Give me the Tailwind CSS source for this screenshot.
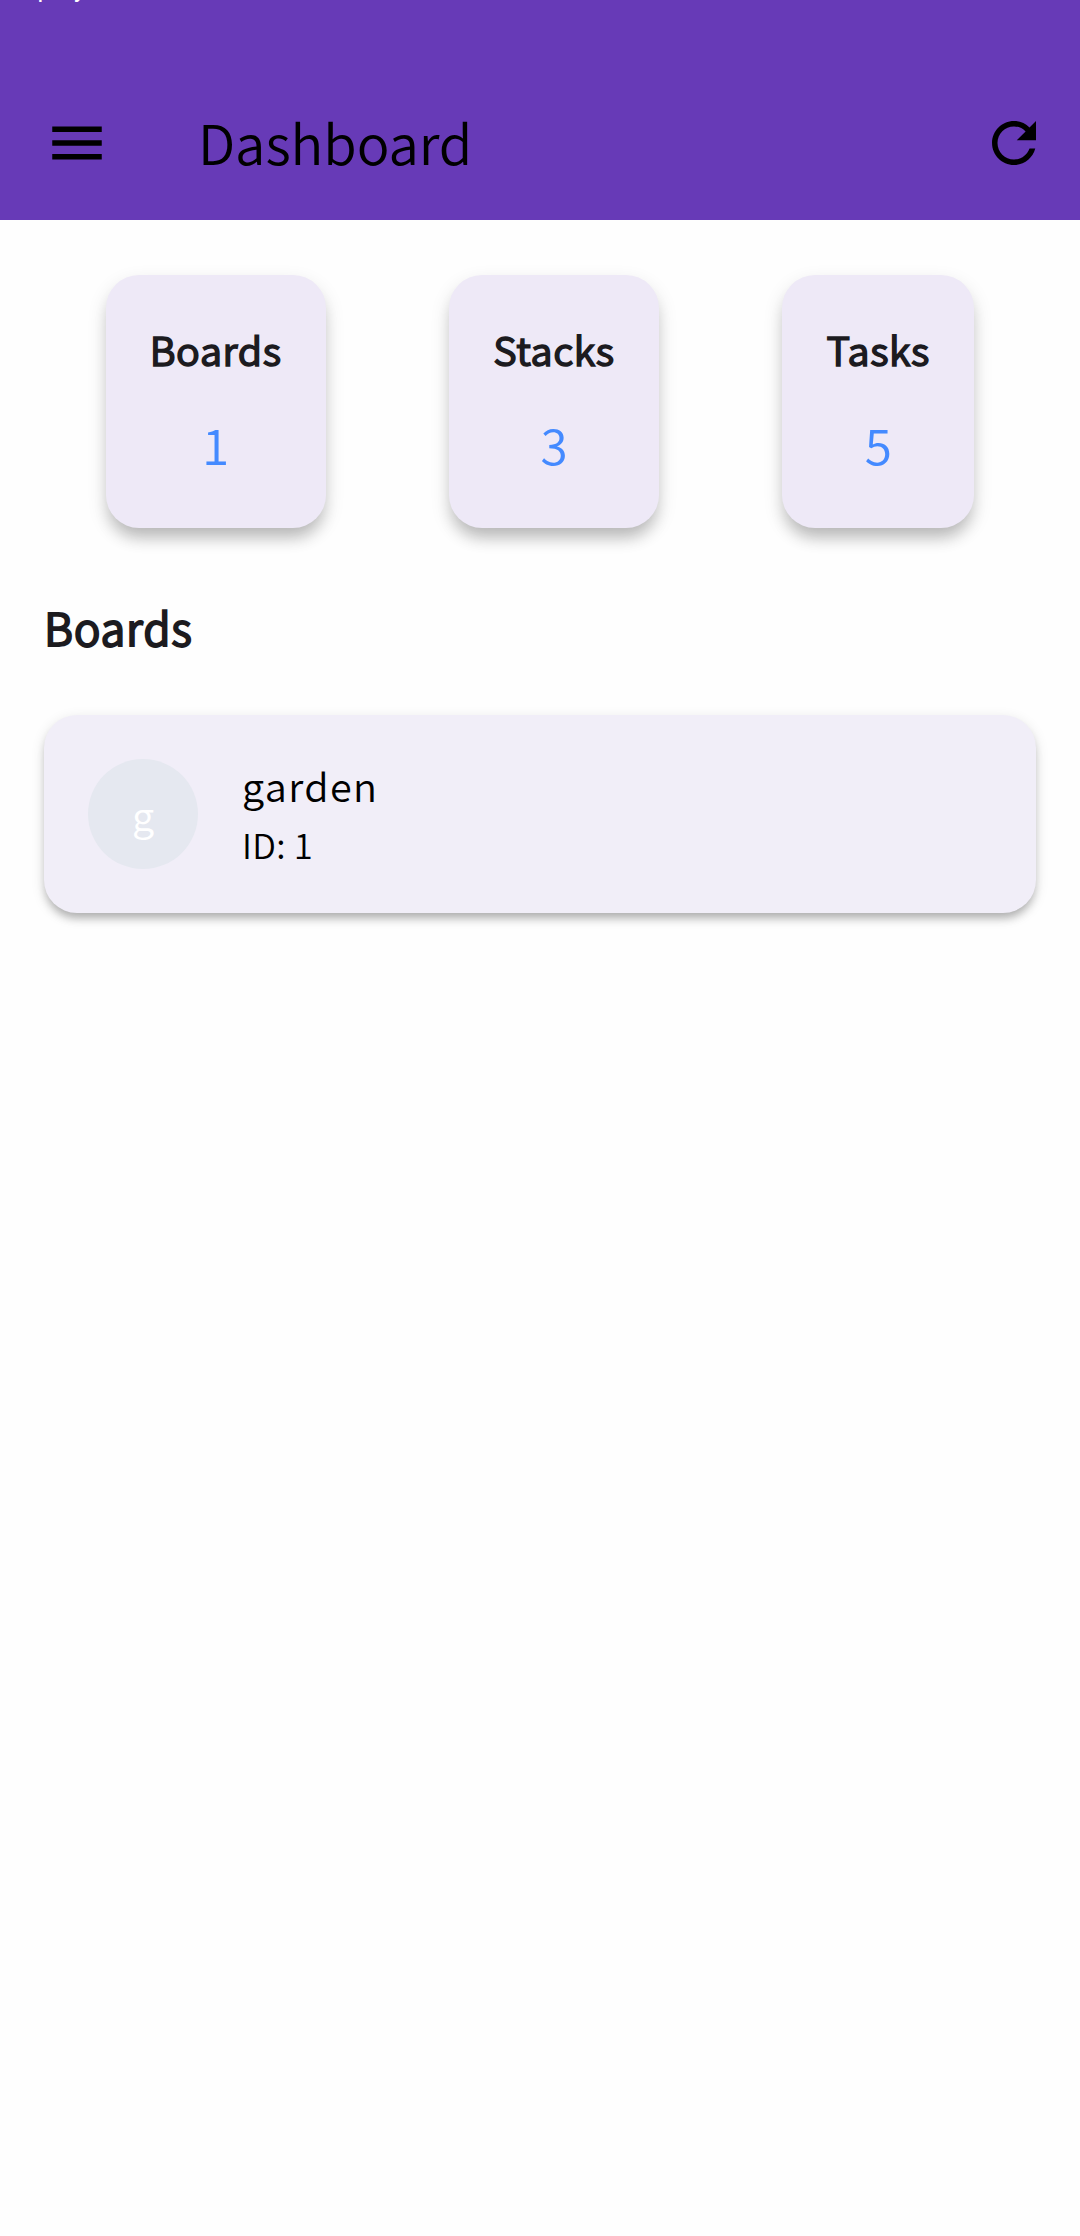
<!DOCTYPE html>
<html lang="en">
<head>
<meta charset="utf-8">
<title>Dashboard</title>
<script src="https://cdn.jsdelivr.net/npm/@tailwindcss/browser@4"></script>
</head>
<body class="min-h-[2236px] bg-[#fefefe] font-['Noto_Sans_CJK_SC',sans-serif] font-[350] text-black">
<header class="relative h-[220px] overflow-hidden bg-[#673ab7] pt-[66px]">
  <span class="absolute left-[-1px] -top-[27px] font-['Roboto',sans-serif] text-[25px] leading-[32px] font-normal tracking-[1px] text-white">Display</span>
  <div class="flex h-[154px] items-center pl-11 pr-[33px]">
    <svg class="size-[66px]" viewBox="0 0 24 24"><path d="M3 18h18v-2H3v2zm0-5h18v-2H3v2zm0-7v2h18V6H3z"/></svg>
    <h1 class="ml-[88px] flex-1 pb-[2px] text-[54.5px] leading-[76px] tracking-[-0.1px]">Dashboard</h1>
    <svg class="size-[66px]" viewBox="0 0 24 24"><path d="M17.65 6.35C16.2 4.9 14.21 4 12 4c-4.42 0-7.99 3.58-7.99 8s3.57 8 7.99 8c3.73 0 6.84-2.55 7.73-6h-2.08c-.82 2.33-3.04 4-5.65 4-3.31 0-6-2.69-6-6s2.69-6 6-6c1.66 0 3.14.69 4.22 1.78L13 11h7V4l-2.35 2.35z"/></svg>
  </div>
</header>
<main class="px-11 pt-[55px]">
  <section class="flex justify-around">
    <div class="flex h-[253px] w-[220px] flex-col items-center rounded-[33px] bg-[#eee9f7] pt-[43px] shadow-[0_13px_16px_-4px_rgba(0,0,0,0.2),0_8px_20px_rgba(0,0,0,0.12)]">
      <h2 class="text-[39.6px] leading-[61px] tracking-[0.6px] text-[#1c1b1f] [-webkit-text-stroke:1.6px_#1c1b1f]">Boards</h2>
      <p class="mt-[24px] text-[49.5px] leading-[82px] text-[#448aff]">1</p>
    </div>
    <div class="flex h-[253px] w-[210px] flex-col items-center rounded-[33px] bg-[#eee9f7] pt-[43px] shadow-[0_13px_16px_-4px_rgba(0,0,0,0.2),0_8px_20px_rgba(0,0,0,0.12)]">
      <h2 class="text-[39.6px] leading-[61px] tracking-[0.6px] text-[#1c1b1f] [-webkit-text-stroke:1.6px_#1c1b1f]">Stacks</h2>
      <p class="mt-[24px] text-[49.5px] leading-[82px] text-[#448aff]">3</p>
    </div>
    <div class="flex h-[253px] w-[192px] flex-col items-center rounded-[33px] bg-[#eee9f7] pt-[43px] shadow-[0_13px_16px_-4px_rgba(0,0,0,0.2),0_8px_20px_rgba(0,0,0,0.12)]">
      <h2 class="text-[39.6px] leading-[61px] tracking-[0.6px] text-[#1c1b1f] [-webkit-text-stroke:1.6px_#1c1b1f]">Tasks</h2>
      <p class="mt-[24px] text-[49.5px] leading-[82px] text-[#448aff]">5</p>
    </div>
  </section>
  <h2 class="mt-[64px] text-[44.55px] leading-[69px] tracking-[0.7px] text-[#1c1b1f] [-webkit-text-stroke:1.8px_#1c1b1f]">Boards</h2>
  <div class="mt-[54px] flex h-[198px] items-center rounded-[33px] bg-[#f1eef8] px-11 shadow-[0_7px_9px_-2px_rgba(0,0,0,0.24),0_4px_14px_rgba(0,0,0,0.12)]">
    <div class="flex size-[110px] items-center justify-center rounded-full bg-[#e5e8f0] text-[39.6px] leading-[60px] text-white">g</div>
    <div class="ml-11 pb-[3px]">
      <p class="text-[39.6px] leading-[60px] tracking-[1.375px]">garden</p>
      <p class="mt-[3px] text-[34.65px] leading-[53px] tracking-[0.3px]">ID: 1</p>
    </div>
  </div>
</main>
</body>
</html>
